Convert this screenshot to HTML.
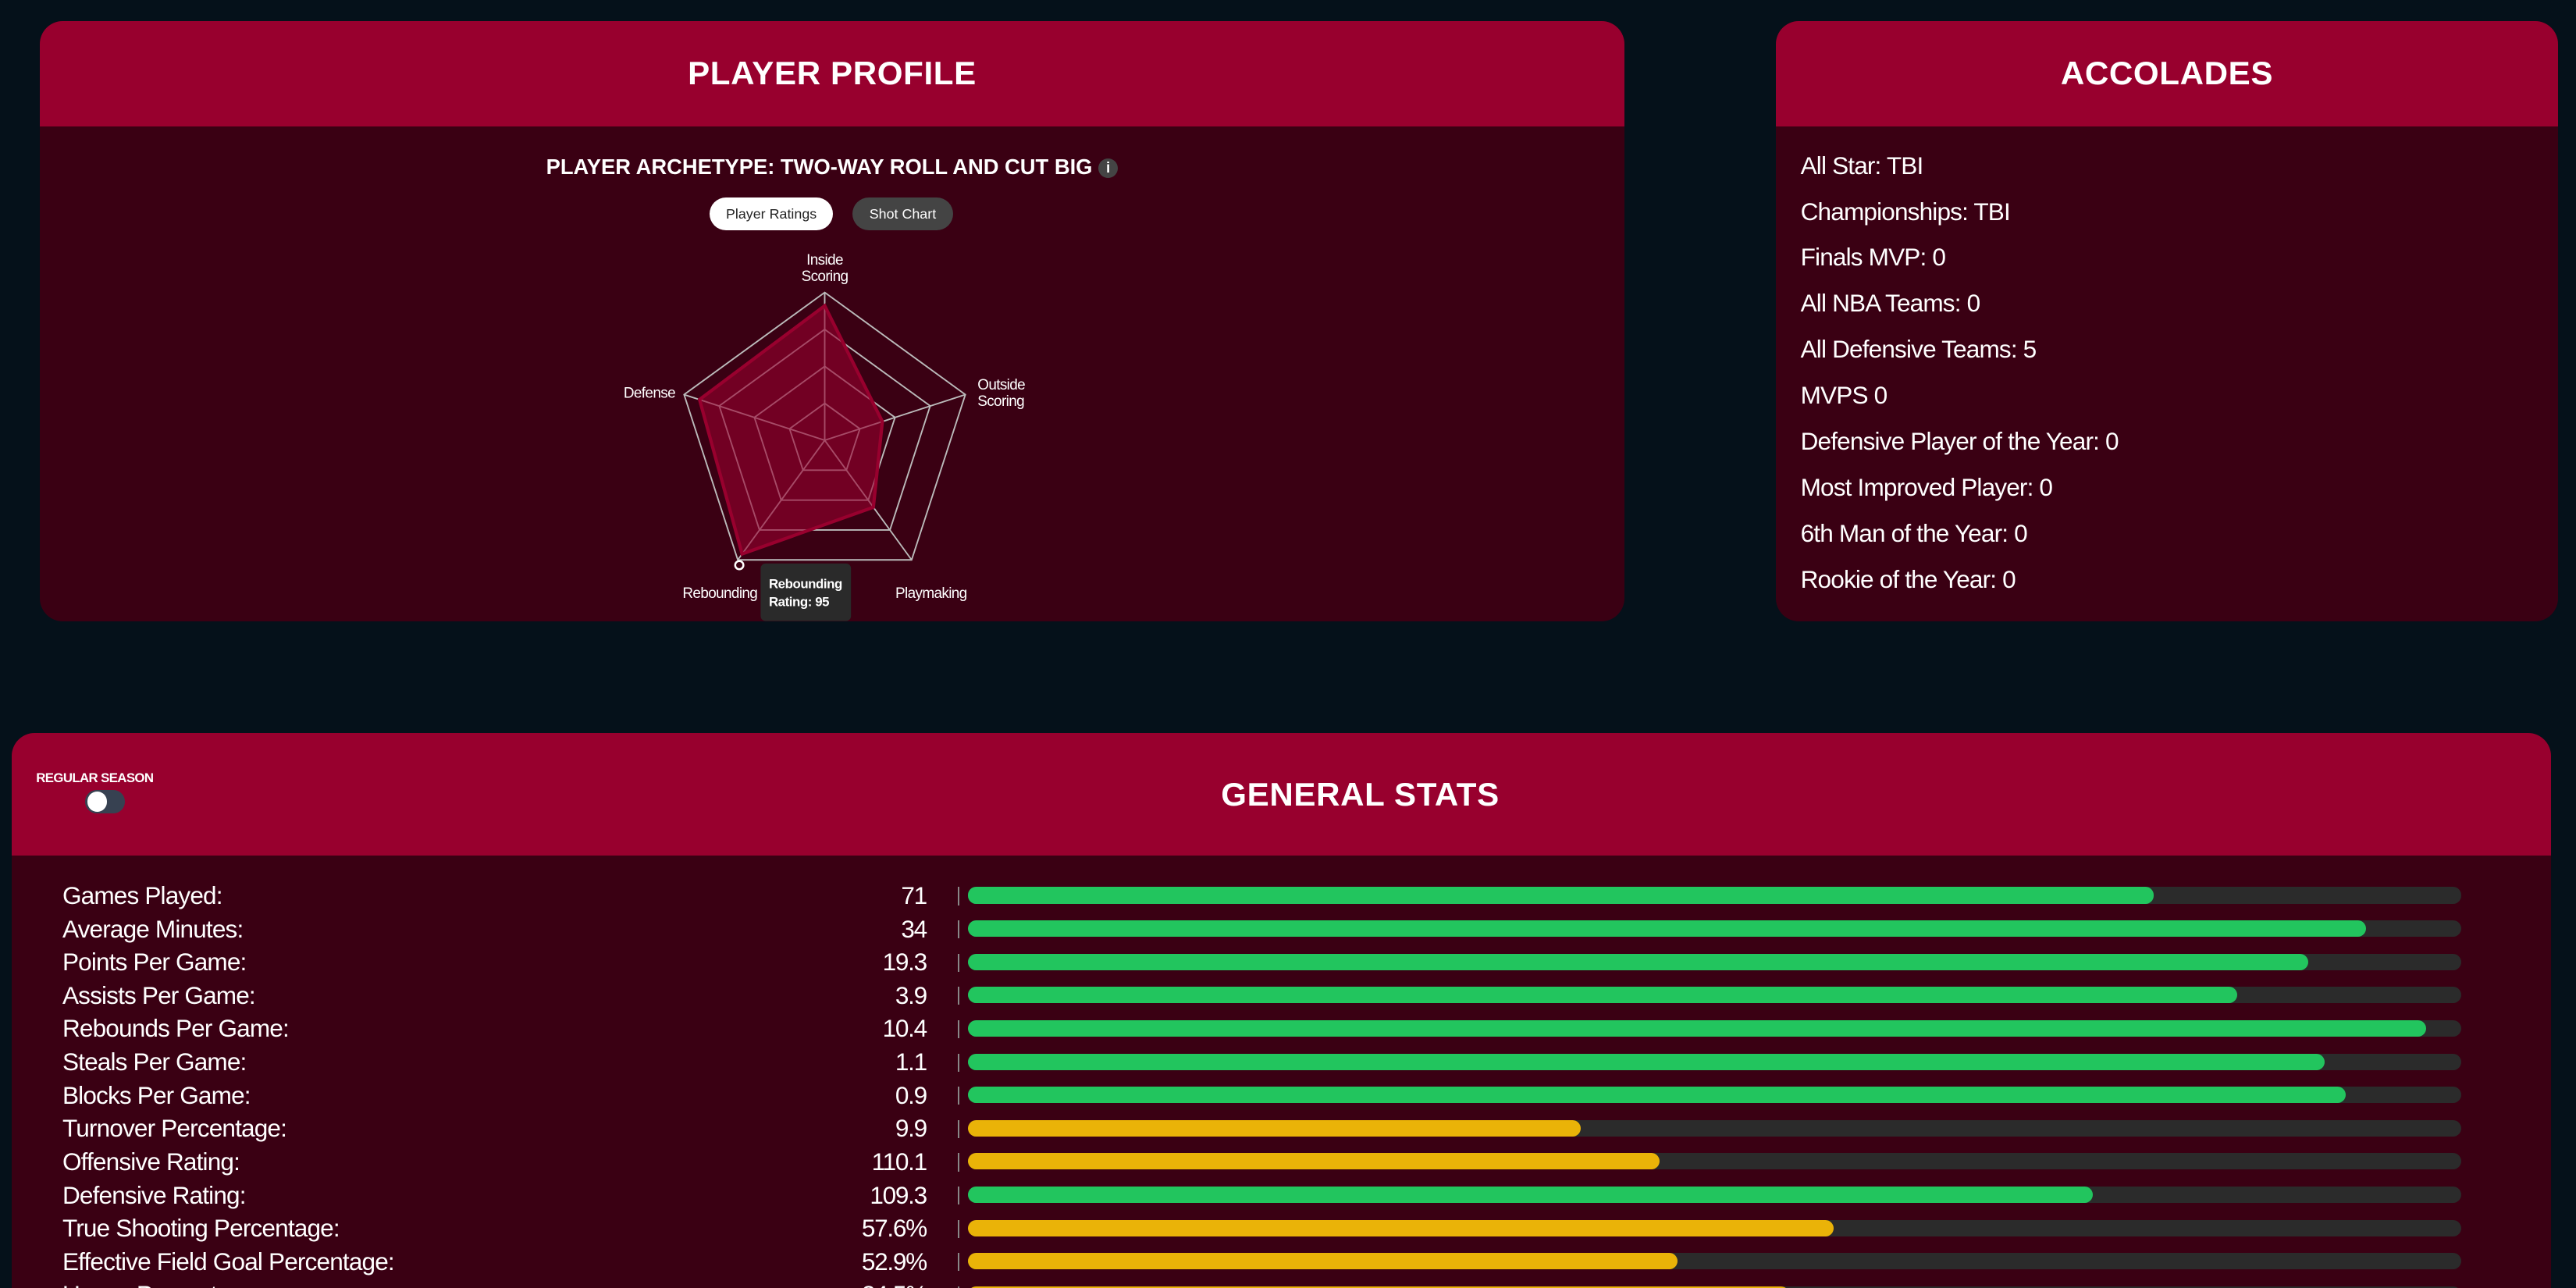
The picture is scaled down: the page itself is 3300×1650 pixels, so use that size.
<!DOCTYPE html>
<html><head><meta charset="utf-8"><style>
html,body{margin:0;padding:0;background:#05111a;overflow:hidden;width:3300px;height:1650px}
#w{zoom:2.10459;width:1568px;height:784px;position:relative;font-family:"Liberation Sans",sans-serif;color:#fff}
.card{position:absolute;background:#3a0013;border-radius:14px;overflow:hidden}
.hd{background:#98002e;text-align:center;font-family:"Liberation Sans",sans-serif;font-weight:bold;font-size:20px;letter-spacing:.3px}
.acc .it{position:absolute;left:15px;font-size:15px;letter-spacing:-0.4px}
.row{position:absolute;left:0;width:1546px;height:20px}
.row .l{position:absolute;left:31px;top:0;font-size:15px;line-height:20px;letter-spacing:-0.4px}
.row .v{position:absolute;right:989px;top:0;font-size:15px;line-height:20px;text-align:right;letter-spacing:-0.6px}
.row .d{position:absolute;left:576px;top:5px;width:1px;height:11px;background:#888}
.row .t{position:absolute;left:582px;top:5px;width:909px;height:10px;border-radius:5px;background:#2b2b2b}
.row .f{height:10px;border-radius:5px}
.g{background:#22c55e}.y{background:#eab308}
</style></head><body><div id="w">

<div class="card" style="left:24px;top:13px;width:965px;height:365px">
 <div class="hd" style="height:64px;line-height:64px">PLAYER PROFILE</div>
 <div style="position:absolute;left:0;width:965px;top:81px;text-align:center;font-family:'Liberation Sans',sans-serif;font-weight:bold;font-size:13px;letter-spacing:0">PLAYER ARCHETYPE: TWO-WAY ROLL AND CUT BIG <span style="display:inline-block;width:12px;height:12px;border-radius:6px;background:#444;font-size:9px;line-height:12px;vertical-align:1px">i</span></div>
 <div style="position:absolute;left:408px;top:107px;width:75px;height:20px;border-radius:10px;background:#fff;color:#222;font-size:8.5px;line-height:20px;text-align:center">Player Ratings</div>
 <div style="position:absolute;left:495px;top:107px;width:61px;height:20px;border-radius:10px;background:#444;color:#fff;font-size:8.5px;line-height:20px;text-align:center">Shot Chart</div>
</div>

<svg style="position:absolute;left:0;top:0" width="1568" height="784">
 <g fill="none" stroke="#bbb" stroke-width="0.9">
  <polygon points="502,178 587.6,240.2 554.9,340.8 449.1,340.8 416.4,240.2"/>
  <polygon points="502,200.5 566.2,247.1 541.7,322.6 462.3,322.6 437.8,247.1"/>
  <polygon points="502,223 544.8,254.1 528.5,304.4 475.5,304.4 459.2,254.1"/>
  <polygon points="502,245.5 523.4,261 515.2,286.2 488.8,286.2 480.6,261"/>
  <path d="M502,268L502,178M502,268L587.6,240.2M502,268L554.9,340.8M502,268L449.1,340.8M502,268L416.4,240.2"/>
 </g>
 <polygon points="502,186.1 537.1,256.6 531.6,308.8 451.7,337.2 425.8,243.2" fill="rgba(152,0,46,0.6)" stroke="#98002e" stroke-width="2"/>
 <circle cx="450" cy="344" r="2.5" fill="none" stroke="#fff" stroke-width="1.2"/>
 <g fill="#fff" font-family="Liberation Sans,sans-serif" font-size="9" letter-spacing="-0.3">
  <text x="502" y="161" text-anchor="middle">Inside</text><text x="502" y="171" text-anchor="middle">Scoring</text>
  <text x="595" y="237">Outside</text><text x="595" y="247">Scoring</text>
  <text x="411" y="242" text-anchor="end">Defense</text>
  <text x="461" y="364" text-anchor="end">Rebounding</text>
  <text x="545" y="364">Playmaking</text>
 </g>
 <rect x="463" y="343" width="55" height="35" rx="3" fill="#2a2a2a"/>
 <g fill="#fff" font-family="Liberation Sans,sans-serif" font-size="8" font-weight="bold" letter-spacing="-0.2"><text x="468" y="358">Rebounding</text><text x="468" y="369">Rating: 95</text></g>
</svg>

<div class="card acc" style="left:1081px;top:13px;width:476px;height:365px">
 <div class="hd" style="height:64px;line-height:64px">ACCOLADES</div>
 <div class="it" style="top:79px">All Star: TBI</div>
 <div class="it" style="top:107px">Championships: TBI</div>
 <div class="it" style="top:135px">Finals MVP: 0</div>
 <div class="it" style="top:163px">All NBA Teams: 0</div>
 <div class="it" style="top:191px">All Defensive Teams: 5</div>
 <div class="it" style="top:219px">MVPS 0</div>
 <div class="it" style="top:247px">Defensive Player of the Year: 0</div>
 <div class="it" style="top:275px">Most Improved Player: 0</div>
 <div class="it" style="top:303px">6th Man of the Year: 0</div>
 <div class="it" style="top:331px">Rookie of the Year: 0</div>
</div>

<div class="card" style="left:7px;top:446px;width:1546px;height:360px">
 <div class="hd" style="height:75px;line-height:75px;padding-left:96px">GENERAL STATS</div>
 <div style="position:absolute;left:15px;top:23px;font-family:'Liberation Sans',sans-serif;font-weight:bold;font-size:8px;letter-spacing:-0.3px">REGULAR SEASON</div>
 <div style="position:absolute;left:45px;top:35px;width:24px;height:14px;border-radius:7px;background:#374151"><div style="position:absolute;left:1px;top:1px;width:12px;height:12px;border-radius:6px;background:#fff"></div></div>
</div>

<div style="position:absolute;left:7px;top:535px">
 <div class="row" style="top:0"><span class="l">Games Played:</span><span class="v">71</span><i class="d"></i><div class="t"><div class="f g" style="width:722px"></div></div></div>
 <div class="row" style="top:20.25px"><span class="l">Average Minutes:</span><span class="v">34</span><i class="d"></i><div class="t"><div class="f g" style="width:851px"></div></div></div>
 <div class="row" style="top:40.5px"><span class="l">Points Per Game:</span><span class="v">19.3</span><i class="d"></i><div class="t"><div class="f g" style="width:816px"></div></div></div>
 <div class="row" style="top:60.75px"><span class="l">Assists Per Game:</span><span class="v">3.9</span><i class="d"></i><div class="t"><div class="f g" style="width:773px"></div></div></div>
 <div class="row" style="top:81px"><span class="l">Rebounds Per Game:</span><span class="v">10.4</span><i class="d"></i><div class="t"><div class="f g" style="width:888px"></div></div></div>
 <div class="row" style="top:101.25px"><span class="l">Steals Per Game:</span><span class="v">1.1</span><i class="d"></i><div class="t"><div class="f g" style="width:826px"></div></div></div>
 <div class="row" style="top:121.5px"><span class="l">Blocks Per Game:</span><span class="v">0.9</span><i class="d"></i><div class="t"><div class="f g" style="width:839px"></div></div></div>
 <div class="row" style="top:141.75px"><span class="l">Turnover Percentage:</span><span class="v">9.9</span><i class="d"></i><div class="t"><div class="f y" style="width:373px"></div></div></div>
 <div class="row" style="top:162px"><span class="l">Offensive Rating:</span><span class="v">110.1</span><i class="d"></i><div class="t"><div class="f y" style="width:421px"></div></div></div>
 <div class="row" style="top:182.25px"><span class="l">Defensive Rating:</span><span class="v">109.3</span><i class="d"></i><div class="t"><div class="f g" style="width:685px"></div></div></div>
 <div class="row" style="top:202.5px"><span class="l">True Shooting Percentage:</span><span class="v">57.6%</span><i class="d"></i><div class="t"><div class="f y" style="width:527px"></div></div></div>
 <div class="row" style="top:222.75px"><span class="l">Effective Field Goal Percentage:</span><span class="v">52.9%</span><i class="d"></i><div class="t"><div class="f y" style="width:432px"></div></div></div>
 <div class="row" style="top:243px"><span class="l">Usage Percentage:</span><span class="v">24.5%</span><i class="d"></i><div class="t"><div class="f y" style="width:500px"></div></div></div>
</div>

</div></body></html>
